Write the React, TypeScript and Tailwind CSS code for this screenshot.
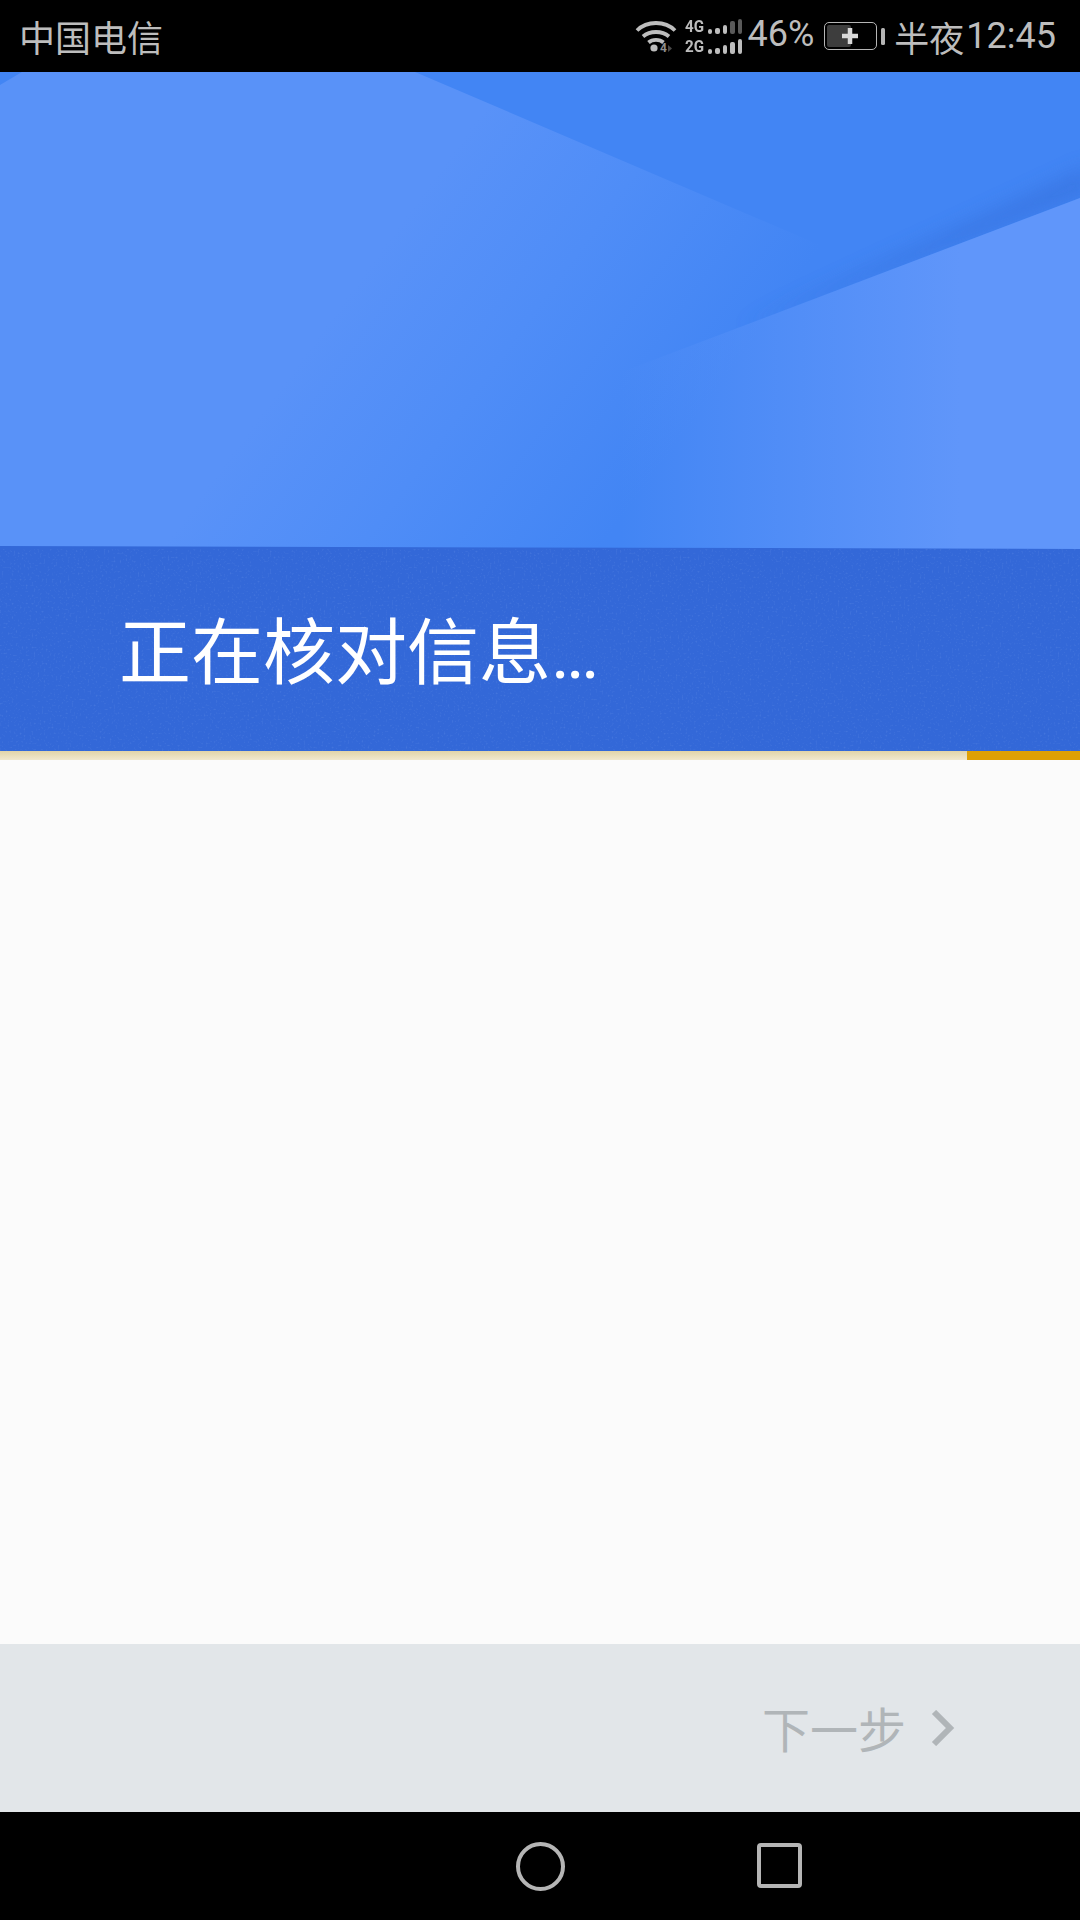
import React from "react";

const cjk = { fontFamily: '"Noto Sans CJK SC", sans-serif' };

function Wifi() {
  return (
    <svg width="42" height="36" viewBox="0 0 42 36" className="block">
      <g fill="none" stroke="#bdbdbd" strokeWidth="3.8" strokeLinecap="butt">
        <path d="M2 12.5C12 2.5 30 2.5 40 12.5" />
        <path d="M8 18.5C15 12.5 27 12.5 34 18.5" />
        <path d="M13.5 24.5C17.5 21 24.5 21 28.5 24.5" />
      </g>
      <circle cx="19" cy="30" r="3.6" fill="#bdbdbd" />
      <text x="25" y="34" fontSize="12" fontWeight="700" fontFamily="Roboto, sans-serif" fill="#8f8f8f">4</text>
      <path d="M33 27v7l4-3.5z" fill="#4a4a4a" />
    </svg>
  );
}

function Signal({ label, bars, dim }: { label: string; bars: number[]; dim: boolean }) {
  return (
    <div className="flex items-end gap-[4px] h-[15px]">
      <span className="w-[19px] text-[16.5px] leading-[15px] font-bold text-[#bdbdbd] scale-x-[0.92] origin-left" style={{ fontFamily: "Roboto, sans-serif" }}>
        {label}
      </span>
      <div className="flex items-end gap-[3px]">
        {bars.map((h, i) => (
          <div
            key={i}
            className={dim && i > 2 ? "w-[4.5px] rounded-[2px] bg-[#5a5a5a]" : "w-[4.5px] rounded-[2px] bg-[#bdbdbd]"}
            style={{ height: h }}
          />
        ))}
      </div>
    </div>
  );
}

function Battery() {
  return (
    <div className="flex items-center gap-[4px]">
      <div className="relative w-[53px] h-[28px] rounded-[5px] border-[1.5px] border-[#b5b5b5] p-[2px]">
        <div className="w-[24px] h-full rounded-[2px] bg-[#3d3d3d]" />
        <svg width="18" height="18" viewBox="0 0 18 18" className="absolute left-[16px] top-[3.5px]">
          <path d="M9 1v16M1 9h16" stroke="#d8d8d8" strokeWidth="4.5" />
        </svg>
      </div>
      <div className="w-[4px] h-[17px] rounded-[1.5px] bg-[#b5b5b5]" />
    </div>
  );
}

function Hero() {
  return (
    <svg viewBox="0 72 1080 477" className="block w-full h-[477px] shrink-0" preserveAspectRatio="none">
      <defs>
        <linearGradient id="leftShape" gradientUnits="userSpaceOnUse" x1="430" y1="183" x2="715" y2="392">
          <stop offset="0" stopColor="#5992f8" />
          <stop offset="0.45" stopColor="#4f8df7" />
          <stop offset="1" stopColor="#4285f4" />
        </linearGradient>
        <linearGradient id="rightShape" gradientUnits="userSpaceOnUse" x1="620" y1="0" x2="960" y2="0">
          <stop offset="0" stopColor="#6096fa" stopOpacity="0" />
          <stop offset="1" stopColor="#6096fa" stopOpacity="1" />
        </linearGradient>
        <filter id="soft" x="-20%" y="-50%" width="140%" height="200%">
          <feGaussianBlur stdDeviation="9" />
        </filter>
        <clipPath id="aboveEdge">
          <polygon points="155,549 1080,198 1080,72 155,72" />
        </clipPath>
      </defs>
      <rect x="0" y="72" width="1080" height="477" fill="#4285f4" />
      <polygon points="0,85 22,72 415,72 1000,322 700,549 0,549" fill="url(#leftShape)" />
      <g clipPath="url(#aboveEdge)">
        <polygon points="1090,194 740,328 1090,165" fill="#3773e0" opacity="0.7" filter="url(#soft)" />
      </g>
      <polygon points="1080,198 155,549 1080,549" fill="url(#rightShape)" />
      <polygon points="0,546 1080,549 0,549" fill="#3368d8" />
    </svg>
  );
}

export default function App() {
  return (
    <div className="flex flex-col w-[1080px] h-[1920px] bg-[#fbfbfb] overflow-hidden" style={cjk}>
      <header className="flex items-center justify-between h-[72px] shrink-0 bg-black pl-[19px] pr-[24px] text-[#bdbdbd]">
        <span className="text-[36px] leading-none">中国电信</span>
        <div className="flex items-center">
          <Wifi />
          <div className="flex flex-col gap-[5px] ml-[8px]">
            <Signal label="4G" bars={[5, 6, 9, 13, 15]} dim />
            <Signal label="2G" bars={[5, 6, 9, 12, 15]} dim={false} />
          </div>
          <span className="ml-[5px] text-[36px] leading-none -mt-[4px]" style={{ fontFamily: "Roboto, sans-serif" }}>46%</span>
          <div className="ml-[10px]">
            <Battery />
          </div>
          <span className="ml-[9px] text-[35px] leading-none">半夜</span>
          <span className="ml-[2px] text-[36px] leading-none" style={{ fontFamily: "Roboto, sans-serif" }}>12:45</span>
        </div>
      </header>

      <Hero />

      <section className="relative flex items-center h-[202px] shrink-0 bg-[#3368d8] pl-[119px]">
        <svg className="absolute inset-0 w-full h-full" aria-hidden="true">
          <filter id="grain">
            <feTurbulence type="fractalNoise" baseFrequency="0.5" numOctaves="2" seed="4" />
            <feColorMatrix values="0 0 0 0 0.55  0 0 0 0 0.7  0 0 0 0 1  0 0 0 2 -1.15" />
          </filter>
          <rect width="100%" height="100%" filter="url(#grain)" opacity="0.2" />
        </svg>
        <h1 className="relative text-[72px] leading-none font-normal text-white">
          正在核对信息<span className="tracking-[-4px]" style={{ fontFamily: "Roboto, sans-serif" }}>...</span>
        </h1>
      </section>

      <div className="flex h-[9px] shrink-0">
        <div className="w-[967px] bg-gradient-to-b from-[#e2d4a8] to-[#f1e8ce]" />
        <div className="flex-1 bg-[#dea005]" />
      </div>

      <main className="flex-1 bg-[#fbfbfb]" />

      <footer className="flex items-center justify-end h-[168px] shrink-0 bg-[#e2e6e9] pr-[125px]">
        <span className="text-[48px] leading-none text-[#b0b5b8] -mt-[3px]">下一步</span>
        <svg width="24" height="36" viewBox="0 0 24 36" className="ml-[25px]">
          <path d="M3 2l16 16L3 34" fill="none" stroke="#b0b5b8" strokeWidth="6" />
        </svg>
      </footer>

      <nav className="relative flex items-center justify-center h-[108px] shrink-0 bg-black">
        <div className="w-[49px] h-[49px] rounded-full border-[4px] border-[#b5b5b5]" />
        <div className="absolute left-[757px] top-[31px] w-[45px] h-[45px] rounded-[4px] border-[4px] border-[#b5b5b5]" />
      </nav>
    </div>
  );
}
